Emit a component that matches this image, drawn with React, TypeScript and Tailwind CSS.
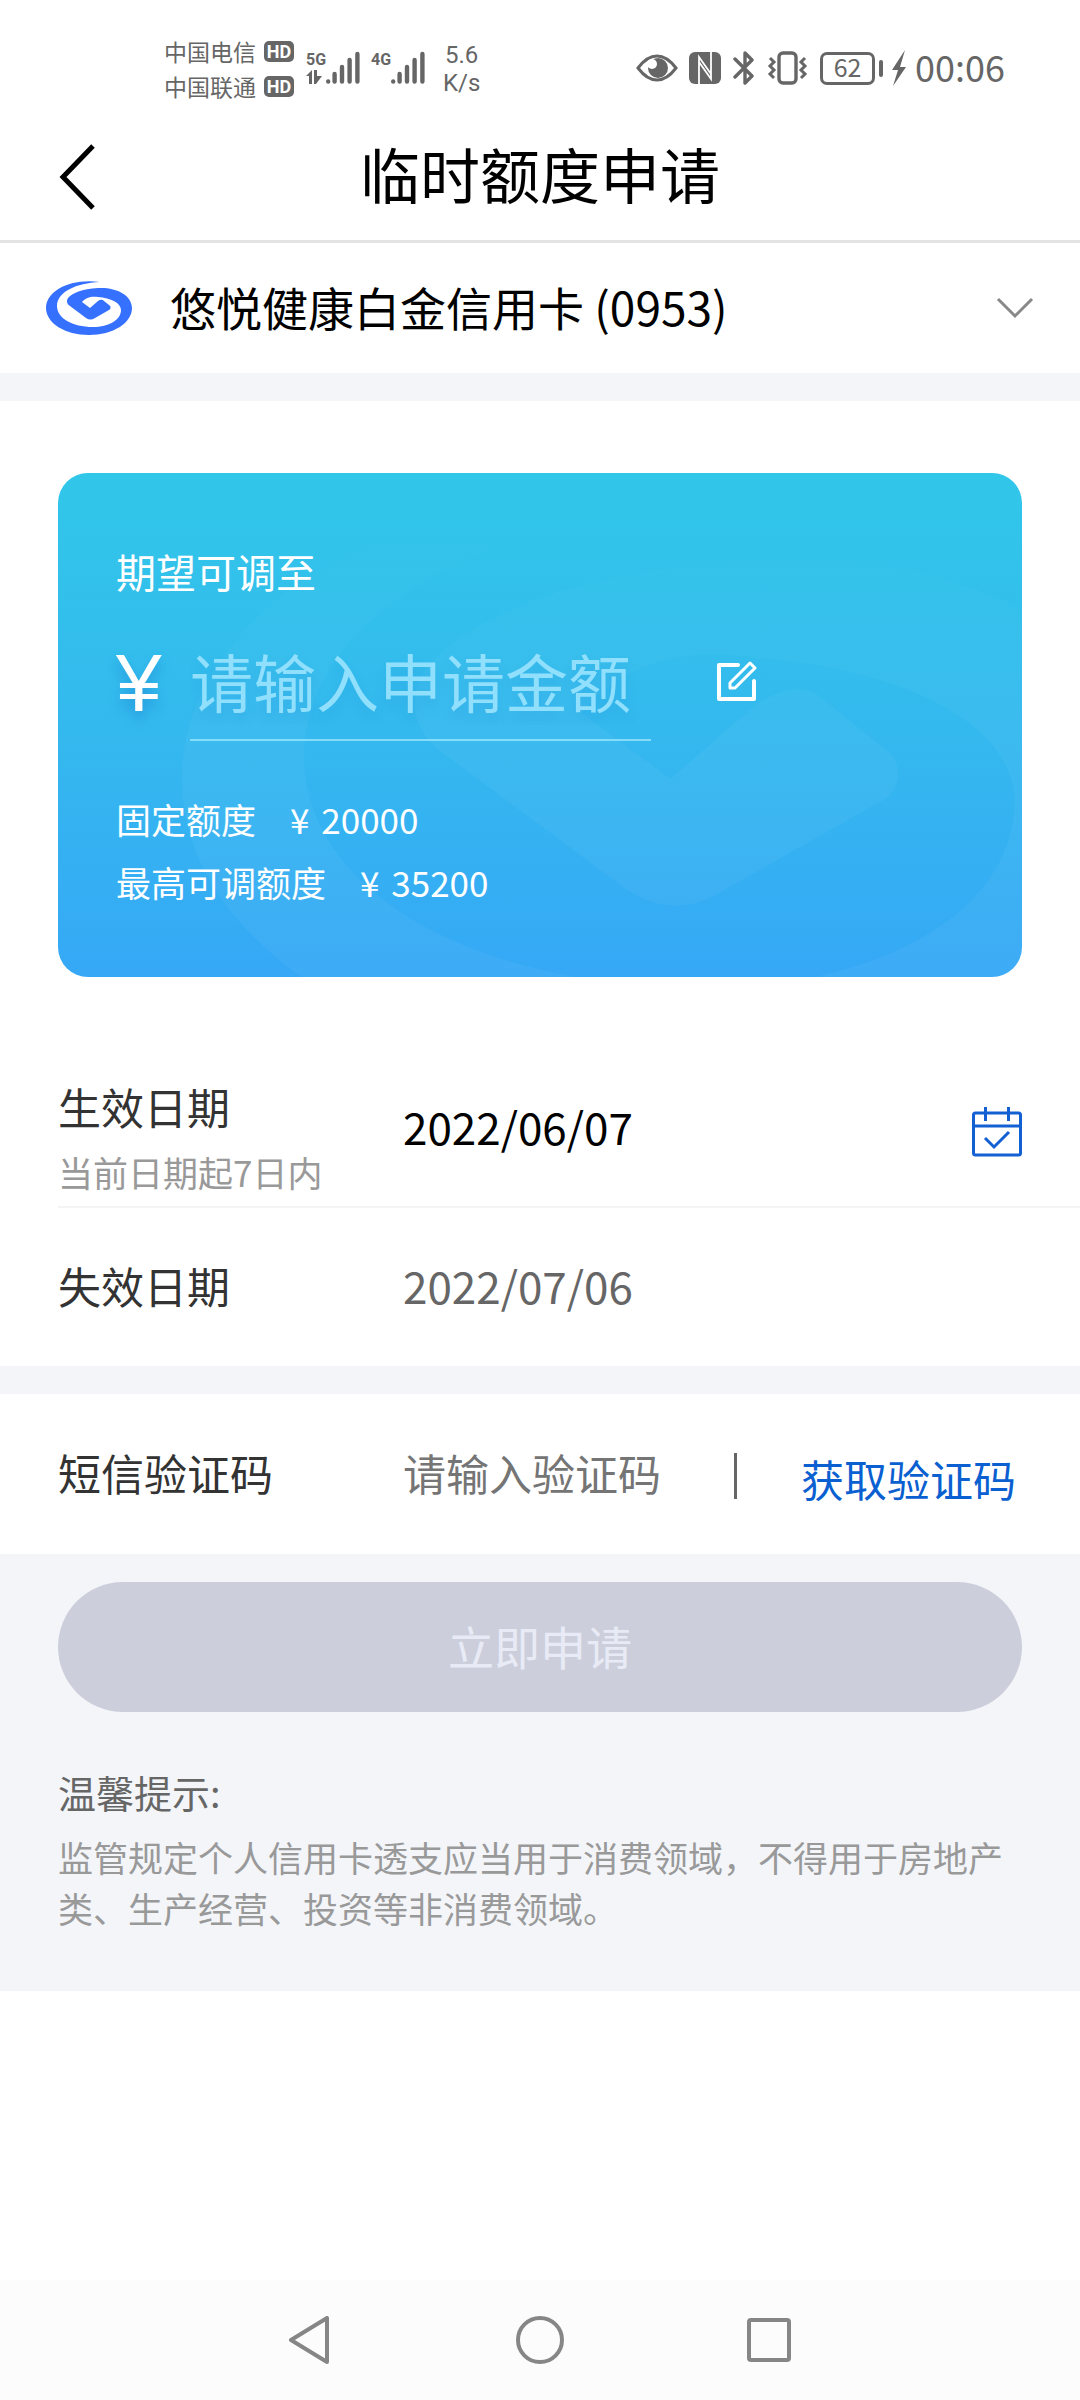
import { useState } from 'react';
import type { ReactNode } from 'react';

const SWIRL =
  'M54 2C24-2 0 11 0 28c0 15 19 27 43 27s43-12 43-27C86 15 70 7 52 8 36 9 26 13 22 18c-2 3-1 6 2 8l16 12c3 2 6 2 9 0l14-8c2-1 2-4 0-5l-5-4c-2-2-4-1-6 0l-8 7-8-6c4-5 10-6 16-5 13 1 23 6 23 13 0 10-12 17-28 17C26 47 11 38 11 26 11 12 30 3 54 2z';

function HdBadge() {
  return (
    <span className="flex h-[21px] w-[30px] items-center justify-center rounded-[5px] bg-[#666] font-['Roboto',sans-serif] text-[18px] leading-none font-bold text-white">
      HD
    </span>
  );
}

function Carrier({ name }: { name: string }) {
  return (
    <div className="flex h-[35px] items-center gap-2">
      <span className="text-[23px] leading-none">{name}</span>
      <HdBadge />
    </div>
  );
}

function Signal({ label, children }: { label: string; children?: ReactNode }) {
  return (
    <div className="flex h-9">
      <div className="flex w-5 flex-col">
        <span className="font-['Roboto',sans-serif] text-[16px] leading-5 font-bold">{label}</span>
        {children}
      </div>
      <svg viewBox="0 0 34 36" className="h-9 w-[34px]" aria-hidden>
        <path
          d="M2.200 31.400v.2M8.600 24v7.600M16 17v14.600M23.600 10v21.600M31.400 4v27.600"
          stroke="currentColor"
          strokeWidth="4.400"
          strokeLinecap="round"
        />
      </svg>
    </div>
  );
}

function StatusIcons() {
  return (
    <div className="flex items-center text-[#666]">
      <svg viewBox="0 0 42 28" className="mr-[11px] h-7 w-[42px]" aria-hidden>
        <path d="M2 14C8 6 14 2 21 2s13 4 19 12c-6 8-12 12-19 12S8 22 2 14z" fill="none" stroke="currentColor" strokeWidth="3" />
        <circle cx="22" cy="14" r="10" fill="currentColor" />
        <circle cx="16" cy="10" r="5" fill="white" />
      </svg>
      <svg viewBox="0 0 32 32" className="mr-3 h-8 w-8" aria-hidden>
        <rect width="32" height="32" rx="6" fill="currentColor" />
        <path d="M10 32V5l12 17M22 0v27L10 10" fill="none" stroke="white" strokeWidth="1.800" />
      </svg>
      <svg viewBox="0 0 22 36" className="mr-3 h-9 w-[22px]" aria-hidden>
        <path d="M2 9l17 17-7 7V3l7 7L2 27" fill="none" stroke="currentColor" strokeWidth="3.400" strokeLinejoin="round" strokeLinecap="round" />
      </svg>
      <svg viewBox="0 0 42 34" className="mr-[11px] h-[34px] w-[42px]" aria-hidden>
        <rect x="12" y="2" width="17" height="30" rx="4" fill="none" stroke="currentColor" strokeWidth="3.400" />
        <path d="M3 7l4 4-4 4 4 4-4 4 4 4M38 7l-4 4 4 4-4 4 4 4-4 4" fill="none" stroke="currentColor" strokeWidth="3" />
      </svg>
      <div className="flex h-[33px] w-[55px] items-center justify-center rounded-[7px] border-[3px] border-[#666] pb-1 text-[25px] leading-none">
        62
      </div>
      <span className="mr-2 ml-1 h-[17px] w-1 rounded-sm bg-[#666]" />
      <svg viewBox="0 0 16 36" className="mr-2 h-9 w-4" aria-hidden>
        <path d="M14 0L1 20h6L2 36l13-19H9z" fill="currentColor" />
      </svg>
      <time className="pb-1 text-[36px] leading-none">00:06</time>
    </div>
  );
}

function StatusBar() {
  return (
    <div className="flex h-[105px] items-start justify-between pt-[34px] pr-[75px] pl-[164px] text-[#666]">
      <div className="flex">
        <div className="flex flex-col">
          <Carrier name="中国电信" />
          <Carrier name="中国联通" />
        </div>
        <div className="mt-4 ml-3 flex gap-[11px]">
          <Signal label="5G">
            <svg viewBox="0 0 16 14" className="h-[14px] w-4" fill="currentColor" aria-hidden>
              <path d="M0 6l6-6v14H3V6zM8 0h3v6h5l-6 8H8z" />
            </svg>
          </Signal>
          <Signal label="4G" />
        </div>
        <div className="mt-[7px] ml-[18px] flex flex-col items-center font-['Roboto',sans-serif] text-[24px] leading-7">
          <span>5.6</span>
          <span>K/s</span>
        </div>
      </div>
      <div className="mt-[14px]">
        <StatusIcons />
      </div>
    </div>
  );
}

function BankLogo() {
  return (
    <svg viewBox="0 0 86 56" className="h-14 w-[86px]" aria-hidden>
      <path d={SWIRL} fill="#3670ff" />
    </svg>
  );
}

function CardWatermark() {
  return (
    <svg viewBox="0 0 964 504" preserveAspectRatio="xMinYMin slice" className="absolute inset-0 h-full w-full" aria-hidden>
      <defs>
        <linearGradient id="swirl-fade" x1="0" y1="0" x2="0" y2="1">
          <stop offset="0.05" stopColor="white" stopOpacity="0" />
          <stop offset="0.45" stopColor="white" stopOpacity="0.04" />
        </linearGradient>
      </defs>
      <path d={SWIRL} transform="translate(124 -2) scale(11.100 11)" fill="url(#swirl-fade)" />
    </svg>
  );
}

function CalendarIcon() {
  return (
    <svg viewBox="0 0 50 50" className="h-[50px] w-[50px]" fill="none" stroke="#1260d2" strokeWidth="3" aria-hidden>
      <rect x="1.500" y="6" width="47" height="42" rx="2" />
      <path d="M1.500 19h47M13.500 0v14M36.500 0v14M13 31l9 9 15-15" />
    </svg>
  );
}

function QuotaLine({ label, amount }: { label: string; amount: string }) {
  return (
    <div className="flex gap-[34px] text-[35px] leading-[63px]">
      <dt>{label}</dt>
      <dd>
        <span className="mr-1">¥</span> {amount}
      </dd>
    </div>
  );
}

function QuotaCard() {
  const [amount, setAmount] = useState('');

  return (
    <section className="relative mx-[58px] mt-[72px] overflow-hidden rounded-[30px] bg-linear-to-b from-[#31c7e9] via-[#34b9ee] to-[#36a8f6] px-[58px] pt-[68px] pb-[64px] text-white">
      <CardWatermark />
      <div className="relative">
        <label htmlFor="amount" className="block text-[40px] leading-[60px]">
          期望可调至
        </label>
        <div className="mt-9 flex h-[104px] items-stretch">
          <span className="w-[74px] font-['Liberation_Sans',sans-serif] text-[82px] leading-[92px] [text-shadow:0_8px_12px_rgba(20,110,200,0.4)]">
            ¥
          </span>
          <input
            id="amount"
            value={amount}
            onChange={(e) => setAmount(e.target.value)}
            placeholder="请输入申请金额"
            className="w-[461px] border-b-2 border-[#84dcf8] bg-transparent pb-4 text-[63px] outline-none placeholder:text-[#8fdffd] [text-shadow:0_8px_12px_rgba(20,110,200,0.15)]"
          />
          <button type="button" aria-label="编辑金额" className="ml-[66px] self-start pt-6">
            <svg viewBox="0 0 40 40" className="h-10 w-10" fill="none" stroke="white" strokeWidth="4" strokeLinejoin="round" aria-hidden>
              <path d="M21 4H2v34h35V20" strokeLinecap="round" />
              <path d="M33 2l5 5-20 20h-5v-5z" strokeWidth="3" />
            </svg>
          </button>
        </div>
        <dl className="mt-[46px]">
          <QuotaLine label="固定额度" amount="20000" />
          <QuotaLine label="最高可调额度" amount="35200" />
        </dl>
      </div>
    </section>
  );
}

function SystemNav() {
  return (
    <nav className="mt-auto flex h-[120px] items-center justify-center gap-[181px] bg-[#fcfcfc]">
      <button type="button" aria-label="返回">
        <svg viewBox="0 0 48 48" className="h-12 w-12" fill="none" stroke="#868686" strokeWidth="4" strokeLinejoin="round" aria-hidden>
          <path d="M40 2v44L4 24z" />
        </svg>
      </button>
      <button type="button" aria-label="主屏幕">
        <svg viewBox="0 0 48 48" className="h-12 w-12" fill="none" stroke="#868686" strokeWidth="4" aria-hidden>
          <circle cx="24" cy="24" r="22" />
        </svg>
      </button>
      <button type="button" aria-label="最近任务">
        <svg viewBox="0 0 48 48" className="h-12 w-12" fill="none" stroke="#868686" strokeWidth="4" aria-hidden>
          <rect x="4" y="4" width="40" height="40" rx="2" />
        </svg>
      </button>
    </nav>
  );
}

export default function App() {
  const [code, setCode] = useState('');

  return (
    <div className="flex min-h-screen flex-col bg-white font-['Noto_Sans_CJK_SC',sans-serif] text-[#333]">
      <StatusBar />

      <header className="grid h-[138px] grid-cols-[120px_1fr_120px] items-center border-b-[3px] border-[#e4e4e4] text-black">
        <button type="button" aria-label="返回" className="pt-2 pl-[58px]">
          <svg viewBox="0 0 38 66" className="h-[66px] w-[38px]" fill="none" stroke="currentColor" strokeWidth="5" aria-hidden>
            <path d="M35 2L5 33l30 31" />
          </svg>
        </button>
        <h1 className="text-center text-[60px] leading-[80px]">临时额度申请</h1>
      </header>

      <button type="button" className="flex h-[130px] items-center px-[46px] text-left text-black">
        <BankLogo />
        <span className="ml-[38px] flex-1 pb-1 text-[46px] leading-[60px]">悠悦健康白金信用卡 (0953)</span>
        <svg viewBox="0 0 38 22" className="h-[22px] w-[38px]" fill="none" stroke="#888" strokeWidth="3" aria-hidden>
          <path d="M2 2l17 17L36 2" />
        </svg>
      </button>
      <div className="h-7 bg-[#f3f5f9]" />

      <QuotaCard />

      <section className="mt-[73px]">
        <div className="ml-[58px] flex h-[158px] items-center border-b-2 border-[#f3f4f6]">
          <div className="w-[345px] pt-5">
            <p className="text-[43px] leading-[64px]">生效日期</p>
            <p className="mt-1 text-[35px] leading-[60px] text-[#999]">当前日期起7日内</p>
          </div>
          <time className="flex-1 pb-1 text-[44px] leading-[60px] text-black">2022/06/07</time>
          <button type="button" aria-label="选择生效日期" className="mr-[58px] pt-2">
            <CalendarIcon />
          </button>
        </div>
        <div className="ml-[58px] flex h-[158px] items-center pb-1">
          <p className="w-[345px] text-[43px] leading-[60px]">失效日期</p>
          <time className="text-[44px] leading-[60px] text-[#666]">2022/07/06</time>
        </div>
      </section>
      <div className="h-7 bg-[#f3f5f9]" />

      <section className="flex h-40 items-center px-[58px]">
        <label htmlFor="sms-code" className="w-[345px] pb-1 text-[43px] leading-[60px]">
          短信验证码
        </label>
        <input
          id="sms-code"
          value={code}
          onChange={(e) => setCode(e.target.value)}
          placeholder="请输入验证码"
          className="min-w-0 flex-1 bg-transparent pb-1 text-[43px] leading-[60px] outline-none placeholder:text-[#757575]"
        />
        <span className="mt-1 h-[46px] w-[3px] bg-[#666]" />
        <button type="button" className="ml-[64px] pt-2 pr-[6px] text-[43px] leading-[60px] text-[#0a60d0]">
          获取验证码
        </button>
      </section>

      <section className="bg-[#f3f5f9] px-[58px] pt-7 pb-[58px]">
        <button type="button" disabled className="h-[130px] w-full rounded-full bg-[#cccfdb] pb-1 text-[46px] text-[#e8ebf6]">
          立即申请
        </button>
        <h2 className="mt-[50px] text-[38px] leading-[60px] text-[#666]">温馨提示:</h2>
        <p className="mt-[9px] text-[35px] leading-[51px] text-[#999]">
          监管规定个人信用卡透支应当用于消费领域，不得用于房地产类、生产经营、投资等非消费领域。
        </p>
      </section>

      <SystemNav />
    </div>
  );
}
